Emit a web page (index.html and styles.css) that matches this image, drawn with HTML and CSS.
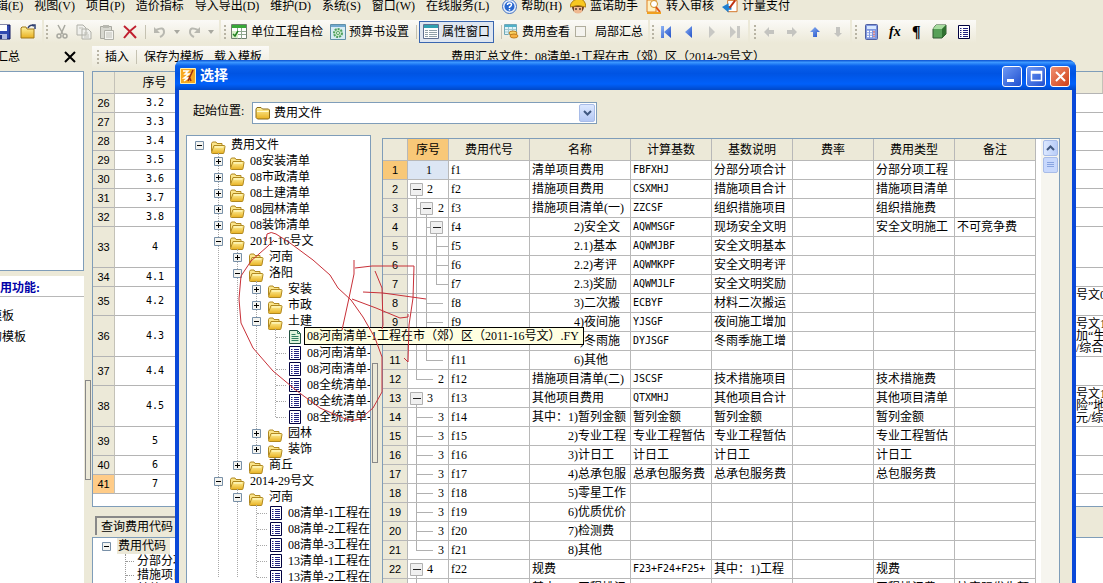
FILE: index.html
```html
<!DOCTYPE html>
<html lang="zh-CN">
<head>
<meta charset="utf-8">
<title>选择</title>
<link rel="stylesheet" href="styles.css">
</head>
<body>
<svg class="defs" aria-hidden="true">
  <defs>
    <linearGradient id="gold" x1="0" y1="0" x2="0" y2="1"><stop offset="0" stop-color="#fff3a0"/><stop offset="1" stop-color="#e8b020"/></linearGradient>
    <linearGradient id="arrow" x1="0" y1="0" x2="1" y2="1"><stop offset="0" stop-color="#8fb4f4"/><stop offset="1" stop-color="#2050c8"/></linearGradient>
  </defs>
  <symbol id="folders" viewBox="0 0 16 14"><path d="M1.500 11.500v-8l1-1.500h3.500l1 1.500h5v2" fill="#fbe58a" stroke="#b08820"/><path d="M4 5.500h10q1 0 1 1l-1 6q0 1-1 1H2.500q-1 0-1-1z" fill="url(#gold)" stroke="#b08820"/><path d="M5 7h8" stroke="#fffbd0"/></symbol>
  <symbol id="folder" viewBox="0 0 16 14"><path d="M1 11.500V3l1-1.500h4L7.500 3h6l1 1v8l-1 1h-11z" fill="url(#gold)" stroke="#8c6a14"/><path d="M2 5.500h11.500" stroke="#fffbd0"/></symbol>
  <symbol id="list" viewBox="0 0 12 14"><path d="M.5.5h11v13H.5z" fill="#fff" stroke="#000040"/><path d="M2 3.500h1.500M5 3.500h5M2 5.500h1.500M5 5.500h5M2 7.500h1.500M5 7.500h5M2 9.500h1.500M5 9.500h5M2 11.500h1.500M5 11.500h5" stroke="#202080"/></symbol>
  <symbol id="page" viewBox="0 0 12 14"><path d="M.5.5h8l3 3v10H.5z" fill="#e0f4dc" stroke="#205040"/><path d="M8.500.5v3h3M2.500 4.500h4M2.500 6.500h7M2.500 8.500h7M2.500 10.500h7" fill="none" stroke="#308060"/></symbol>
  <symbol id="plus" viewBox="0 0 9 9"><path d="M.5.5h8v8h-8z" fill="#f4f4f0" stroke="#7890a8"/><path d="M2 4.500h5M4.500 2v5" stroke="#000"/></symbol>
  <symbol id="minus" viewBox="0 0 9 9"><path d="M.5.5h8v8h-8z" fill="#f4f4f0" stroke="#7890a8"/><path d="M2 4.500h5" stroke="#000"/></symbol>
  <symbol id="t-box1"><path d="M8.500 15v4" stroke="#b0b0b0"/><path d="M2.500 3.500h12v12h-12z" fill="#f0f0f0" stroke="#b0b0b0"/><path d="M5 9.500h8" stroke="#222"/></symbol>
  <symbol id="t-box2"><path d="M8.500 0v19M8 9.500h4M18.500 15v4" stroke="#b0b0b0"/><path d="M12.500 3.500h12v12h-12z" fill="#f0f0f0" stroke="#b0b0b0"/><path d="M15 9.500h8" stroke="#222"/></symbol>
  <symbol id="t-box3"><path d="M8.500 0v19M18.500 0v19M18 9.500h4M28.500 15v4" stroke="#b0b0b0"/><path d="M22.500 3.500h12v12h-12z" fill="#f0f0f0" stroke="#b0b0b0"/><path d="M25 9.500h8" stroke="#222"/></symbol>
  <symbol id="t-leaf3"><path d="M8.500 0v19M18.500 0v19M28.500 0v19M28 9.500h12" stroke="#b0b0b0"/></symbol>
  <symbol id="t-end3"><path d="M8.500 0v19M18.500 0v19M28.500 0v9M28 9.500h12" stroke="#b0b0b0"/></symbol>
  <symbol id="t-leaf2"><path d="M8.500 0v19M18.500 0v19M18 9.500h17" stroke="#b0b0b0"/></symbol>
  <symbol id="t-end2"><path d="M8.500 0v19M18.500 0v9M18 9.500h17" stroke="#b0b0b0"/></symbol>
  <symbol id="t-leaf1"><path d="M8.500 0v19M8 9.500h17" stroke="#b0b0b0"/></symbol>
  <symbol id="t-end1"><path d="M8.500 0v9M8 9.500h17" stroke="#b0b0b0"/></symbol>
</svg>

<div class="app">
  <nav class="menubar">
    <button>编辑(E)</button><button>视图(V)</button><button>项目(P)</button><button>造价指标</button><button>导入导出(D)</button><button>维护(D)</button><button>系统(S)</button><button>窗口(W)</button><button>在线服务(L)</button>
    <div class="helpers">
    <button><svg width="15" height="15" viewBox="0 0 15 15"><circle cx="7.500" cy="7.500" r="7" fill="#e8f0fc" stroke="#4070c0"/><circle cx="7.500" cy="7.500" r="5" fill="#2868d0"/><path d="M5.500 6q0-2 2-2t2 1.700q0 1-2 2.300v1M7.500 10v1.500" fill="none" stroke="#fff" stroke-width="1.500"/></svg>帮助(H)</button>
    <button><svg width="16" height="15" viewBox="0 0 16 15"><circle cx="8" cy="8" r="6" fill="#704020"/><path d="M4 8h8v5q-4 3-8 0z" fill="#f0b890"/><path d="M0 8q1-7 8-8t8 8q-8-3-16 0z" fill="#f8c820" stroke="#b08010"/><path d="M6 9v2M10 9v2" stroke="#000"/></svg>蓝诺助手</button>
    <button><svg width="16" height="15" viewBox="0 0 16 15"><path d="M1 1h9v12H1z" fill="#fff0c0" stroke="#e08020"/><circle cx="8" cy="5" r="3.500" fill="#fff" stroke="#d09020"/><path d="M10 8l4 5" stroke="#e05010" stroke-width="2"/><path d="M1 14h14" stroke="#f0a020" stroke-width="2"/></svg>转入审核</button>
    <button><svg width="16" height="15" viewBox="0 0 17 15"><path d="M6 1h10v12H6z" fill="#fff" stroke="#d07020"/><path d="M0 8l7-4v3h3v4H7v3z" fill="#2080d0"/><path d="M14 1L8 9" stroke="#c03010" stroke-width="2"/></svg>计量支付</button>
    </div>
  </nav>

  <div class="toolbars">
    <div class="strip strip-file">
      <button aria-label="保存"><svg width="16" height="16" viewBox="0 0 16 16"><path d="M1 1h14v14H1z" fill="#3048b0" stroke="#101860"/><path d="M4 1h8v6H4z" fill="#fff"/><path d="M4 10h8v5H4z" fill="#b0b8e0"/><path d="M5 11h2v4H5z" fill="#203080"/></svg></button>
      <button aria-label="打开"><svg width="17" height="16" viewBox="0 0 17 16"><path d="M1 14V4l1-1h4l1 2h7v9z" fill="url(#gold)" stroke="#a07818"/><path d="M8 4q2-4 6-2M12 1h3v4" fill="none" stroke="#304070" stroke-width="1.500"/></svg></button>
    </div>
    <div class="strip strip-edit">
      <i class="grip"></i>
      <button aria-label="剪切"><svg width="14" height="16" viewBox="0 0 14 16"><path d="M3 1l5 9M10 1L6 10" stroke="#a8a8a0" stroke-width="1.500"/><circle cx="4" cy="12" r="2" fill="none" stroke="#a8a8a0" stroke-width="1.500"/><circle cx="10" cy="12" r="2" fill="none" stroke="#a8a8a0" stroke-width="1.500"/></svg></button>
      <button aria-label="复制"><svg width="16" height="16" viewBox="0 0 16 16"><path d="M1 1h6l3 3v7H1zM6 5h6l3 3v7H6z" fill="#f0f0ec" stroke="#b0b0a8"/><path d="M8 9h4M8 11h5M8 13h5M3 4h4" stroke="#c0c0b8"/></svg></button>
      <button aria-label="粘贴"><svg width="16" height="16" viewBox="0 0 16 16"><path d="M1.500 2.500h11v12h-11z" fill="#d8d8d0" stroke="#a8a8a0"/><path d="M4 1h6v3H4z" fill="#b8b8b0"/><path d="M5.500 6.500h9v9h-9z" fill="#f4f4f0" stroke="#b0b0a8"/><path d="M7 9h6M7 11h6M7 13h6" stroke="#c0c0b8"/></svg></button>
      <button aria-label="删除"><svg width="16" height="16" viewBox="0 0 16 16"><path d="M2 2q6 5 12 12M14 2Q7 7 2 14" fill="none" stroke="#c02030" stroke-width="2"/></svg></button>
      <i class="sep"></i>
      <button aria-label="撤销"><svg width="14" height="14" viewBox="0 0 14 14"><path d="M3 5q8-4 8 2 0 3-4 5" fill="none" stroke="#b8b8b0" stroke-width="2"/><path d="M1 2v6h6z" fill="#b8b8b0"/></svg></button>
      <i class="caret"></i>
      <button aria-label="重做"><svg width="14" height="14" viewBox="0 0 14 14"><path d="M11 5Q3 1 3 7q0 3 4 5" fill="none" stroke="#b8b8b0" stroke-width="2"/><path d="M13 2v6H7z" fill="#b8b8b0"/></svg></button>
      <i class="caret"></i>
    </div>
    <div class="strip strip-view">
      <i class="grip"></i>
      <button><svg width="17" height="16" viewBox="0 0 17 16"><path d="M.5.5h15v14H.5z" fill="#fff" stroke="#708070"/><path d="M1 1h14v3H1z" fill="#38a838"/><path d="M1 7.500h14M1 10.500h14M6.500 4v11M10.500 4v11" stroke="#90a890"/><path d="M1 7h6v7H1z" fill="#d8f0c8"/><path d="M2 10l2 2 3-5" fill="none" stroke="#208020" stroke-width="1.500"/></svg>单位工程自检</button>
      <button><svg width="16" height="16" viewBox="0 0 16 16"><path d="M.5.5h15v15H.5z" fill="#d8ecf4" stroke="#6090a8"/><path d="M1 1h14v2H1z" fill="#70a8d0"/><circle cx="8" cy="9" r="4" fill="#c8e8c8" stroke="#50a060" stroke-width="2" stroke-dasharray="2 1"/><circle cx="8" cy="9" r="1.500" fill="#fff" stroke="#50a060"/></svg>预算书设置</button>
      <i class="sep"></i>
      <button class="pressed"><svg width="16" height="15" viewBox="0 0 16 15"><path d="M.5.5h15v14H.5z" fill="#fff" stroke="#607090"/><path d="M1 1h14v3H1z" fill="#30a0b0"/><path d="M2 6.500h3M6 6.500h8M2 8.500h3M6 8.500h8M2 10.500h3M6 10.500h8M2 12.500h3M6 12.500h8" stroke="#90a0a8"/></svg>属性窗口</button>
      <i class="sep"></i>
      <button><svg width="15" height="15" viewBox="0 0 15 15"><path d="M.5.5h12v10H.5z" fill="#e0f4f8" stroke="#70a8b8"/><path d="M1 1h11v2H1z" fill="#50b0c8"/><path d="M1 5.500h11M1 8h11M4.500 3v8M8.500 3v8" stroke="#a0c8d0"/><ellipse cx="9" cy="9" rx="4" ry="2" fill="#f8d060" stroke="#c08020"/><ellipse cx="10" cy="12" rx="4" ry="2" fill="#f8b040" stroke="#c08020"/></svg>费用查看</button>
      <label class="check"><input type="checkbox">局部汇总</label>
    </div>
    <div class="strip strip-nav">
      <i class="grip"></i>
      <button aria-label="第一"><svg width="12" height="14" viewBox="0 0 12 14"><path d="M1 1h3v12H1zM11 1v12L4 7z" fill="url(#arrow)"/></svg></button>
      <button aria-label="上一"><svg width="12" height="14" viewBox="0 0 12 14"><path d="M9 1v12L2 7z" fill="url(#arrow)"/></svg></button>
      <button aria-label="下一"><svg width="12" height="14" viewBox="0 0 12 14"><path d="M3 1v12l6-6z" fill="#c8c8c4"/></svg></button>
      <button aria-label="最后"><svg width="12" height="14" viewBox="0 0 12 14"><path d="M1 1v12l6-6zM8 1h3v12H8z" fill="#c8c8c4"/></svg></button>
    </div>
    <div class="strip strip-move">
      <i class="grip"></i>
      <button aria-label="左移"><svg width="12" height="12" viewBox="0 0 12 12"><path d="M1 6l5-5v3h5v4H6v3z" fill="#c4c4c0"/></svg></button>
      <button aria-label="右移"><svg width="12" height="12" viewBox="0 0 12 12"><path d="M11 6L6 1v3H1v4h5v3z" fill="#c4c4c0"/></svg></button>
      <button aria-label="上移"><svg width="12" height="12" viewBox="0 0 12 12"><path d="M6 1l5 5H8v5H4V6H1z" fill="url(#arrow)"/></svg></button>
      <button aria-label="下移"><svg width="12" height="12" viewBox="0 0 12 12"><path d="M6 11L2 7h2V1h4v6h2z" fill="#c4c4c0"/></svg></button>
    </div>
    <div class="strip strip-tools">
      <i class="grip"></i>
      <button aria-label="计算器"><svg width="13" height="16" viewBox="0 0 13 16"><rect x=".5" y=".5" width="12" height="15" rx="1" fill="#8098e0" stroke="#5060a0"/><path d="M2 2h9v3H2z" fill="#d8e8ff"/><path d="M2 7.500h9M2 10h9M2 12.500h9" stroke="#fff" stroke-width="1.500" stroke-dasharray="2 1"/><path d="M9 7v6" stroke="#d06060" stroke-width="1.500" stroke-dasharray="1.500 1"/></svg></button>
      <button aria-label="函数" class="fx">fx</button>
      <button aria-label="段落" class="pilcrow">¶</button>
      <button aria-label="模型"><svg width="15" height="15" viewBox="0 0 15 15"><path d="M1 5l3-4h10v9l-4 4H1z" fill="#58a058" stroke="#305830"/><path d="M1 5l3-4h10l-4 4z" fill="#a8dca0"/><path d="M10 5l4-4v9l-4 4z" fill="#307030"/></svg></button>
      <button aria-label="列表"><svg width="12" height="14"><use href="#list"/></svg></button>
    </div>
  </div>

  <div class="workspace">
    <aside class="side">
      <header class="side-head"><span>费用汇总</span><button aria-label="关闭"><svg width="12" height="12" viewBox="0 0 12 12"><path d="M1 1l10 10M11 1L1 11" stroke="#000" stroke-width="2"/></svg></button></header>
      <div class="side-tree"></div>
      <div class="side-links">
        <h2><span>常用功能:</span></h2>
        <a href="#" class="link-a">载入模板</a>
        <a href="#" class="link-b">我的模板</a>
      </div>
    </aside>
    <div class="splitter"><i></i></div>
    <main class="main">
      <header class="main-head">
        <div class="strip strip-tpl"><i class="grip"></i><button>插入</button><i class="sep"></i><button>保存为模板</button><button>载入模板</button></div>
        <p>费用汇总文件：08清单-1工程在市（郊）区（2014-29号文）</p>
      </header>
      <div class="sheet">
        <table class="back-table">
          <colgroup><col class="c-num"><col class="c-seq"><col><col class="c-note"></colgroup>
          <thead><tr><th></th><th>序号</th><th></th><th></th></tr></thead>
          <tbody>
            <tr><th>26</th><td>3.2</td><td></td><td></td></tr>
            <tr><th>27</th><td>3.3</td><td></td><td></td></tr>
            <tr><th>28</th><td>3.4</td><td></td><td></td></tr>
            <tr><th>29</th><td>3.5</td><td></td><td></td></tr>
            <tr><th>30</th><td>3.6</td><td></td><td></td></tr>
            <tr><th>31</th><td>3.7</td><td></td><td></td></tr>
            <tr><th>32</th><td>3.8</td><td></td><td></td></tr>
            <tr class="tall"><th>33</th><td>4</td><td></td><td></td></tr>
            <tr><th>34</th><td>4.1</td><td></td><td></td></tr>
            <tr class="mid"><th>35</th><td>4.2</td><td></td><td class="note one">号文0</td></tr>
            <tr class="tall"><th>36</th><td>4.3</td><td></td><td class="note">号文1<br>加“生<br>/综合</td></tr>
            <tr class="mid"><th>37</th><td>4.4</td><td></td><td></td></tr>
            <tr class="tall"><th>38</th><td>4.5</td><td></td><td class="note">号文1<br>险”地<br>元/综</td></tr>
            <tr class="mid"><th>39</th><td>5</td><td></td><td></td></tr>
            <tr><th>40</th><td>6</td><td></td><td></td></tr>
            <tr><th class="hot">41</th><td>7</td><td></td><td></td></tr>
          </tbody>
        </table>
      </div>
      <div class="tabs"><button>查询费用代码</button></div>
      <div class="codes">
        <div class="codes-root"><svg width="9" height="9"><use href="#minus"/></svg><span>费用代码</span></div>
        <ul><li>分部分项合计</li><li>措施项目合计</li><li>其他项目合计</li></ul>
      </div>
    </main>
  </div>
</div>

<section class="dialog" role="dialog" aria-labelledby="dlg-title">
  <header class="titlebar">
    <svg width="16" height="16" viewBox="0 0 16 16"><path d="M.5.5h15v15H.5z" fill="#f8a820" stroke="#fff0b0"/><path d="M3 3h5l-3 3h4l-5 4h4l-4 3" fill="none" stroke="#fff" stroke-width="1.500"/><path d="M13 2L8 13M9 8l2 5" stroke="#a03010" stroke-width="1.500"/></svg>
    <h1 id="dlg-title">选择</h1>
    <button aria-label="最小化"><svg width="19" height="19" viewBox="0 0 19 19"><path d="M4 12h7v3H4z" fill="#fff"/></svg></button>
    <button aria-label="最大化"><svg width="19" height="19" viewBox="0 0 19 19"><path d="M4.500 4.500h10v9h-10zM4 6h11" fill="none" stroke="#fff" stroke-width="1.500"/></svg></button>
    <button aria-label="关闭" class="close"><svg width="19" height="19" viewBox="0 0 19 19"><path d="M5 5l9 9M14 5l-9 9" stroke="#fff" stroke-width="2"/></svg></button>
  </header>
  <div class="dialog-body">
    <div class="start">
      <label for="start">起始位置:</label>
      <div class="combo">
        <svg width="16" height="14"><use href="#folder"/></svg>
        <select id="start"><option>费用文件</option></select>
        <span class="drop"><svg width="9" height="6" viewBox="0 0 9 6"><path d="M1 1l3.500 3.500L8 1" fill="none" stroke="#405880" stroke-width="2"/></svg></span>
      </div>
    </div>
    <div class="panes">
      <div class="tree">
        <ul>
          <li><div><svg class="x"><use href="#minus"/></svg><svg class="f"><use href="#folders"/></svg>费用文件</div>
            <ul>
              <li><div><svg class="x"><use href="#plus"/></svg><svg class="f"><use href="#folders"/></svg>08安装清单</div></li>
              <li><div><svg class="x"><use href="#plus"/></svg><svg class="f"><use href="#folders"/></svg>08市政清单</div></li>
              <li><div><svg class="x"><use href="#plus"/></svg><svg class="f"><use href="#folders"/></svg>08土建清单</div></li>
              <li><div><svg class="x"><use href="#plus"/></svg><svg class="f"><use href="#folders"/></svg>08园林清单</div></li>
              <li><div><svg class="x"><use href="#plus"/></svg><svg class="f"><use href="#folders"/></svg>08装饰清单</div></li>
              <li><div><svg class="x"><use href="#minus"/></svg><svg class="f"><use href="#folders"/></svg>2011-16号文</div>
                <ul>
                  <li><div><svg class="x"><use href="#plus"/></svg><svg class="f"><use href="#folders"/></svg>河南</div></li>
                  <li><div><svg class="x"><use href="#minus"/></svg><svg class="f"><use href="#folders"/></svg>洛阳</div>
                    <ul>
                      <li><div><svg class="x"><use href="#plus"/></svg><svg class="f"><use href="#folders"/></svg>安装</div></li>
                      <li><div><svg class="x"><use href="#plus"/></svg><svg class="f"><use href="#folders"/></svg>市政</div></li>
                      <li><div><svg class="x"><use href="#minus"/></svg><svg class="f"><use href="#folders"/></svg>土建</div>
                        <ul class="files">
                          <li><div><svg class="d"><use href="#page"/></svg>08河南清单-</div></li>
                          <li><div><svg class="d"><use href="#list"/></svg>08河南清单-</div></li>
                          <li><div><svg class="d"><use href="#list"/></svg>08河南清单-</div></li>
                          <li><div><svg class="d"><use href="#list"/></svg>08全统清单-</div></li>
                          <li><div><svg class="d"><use href="#list"/></svg>08全统清单-</div></li>
                          <li><div><svg class="d"><use href="#list"/></svg>08全统清单-</div></li>
                        </ul></li>
                      <li><div><svg class="x"><use href="#plus"/></svg><svg class="f"><use href="#folders"/></svg>园林</div></li>
                      <li><div><svg class="x"><use href="#plus"/></svg><svg class="f"><use href="#folders"/></svg>装饰</div></li>
                    </ul></li>
                  <li><div><svg class="x"><use href="#plus"/></svg><svg class="f"><use href="#folders"/></svg>商丘</div></li>
                </ul></li>
              <li><div><svg class="x"><use href="#minus"/></svg><svg class="f"><use href="#folders"/></svg>2014-29号文</div>
                <ul>
                  <li><div><svg class="x"><use href="#minus"/></svg><svg class="f"><use href="#folders"/></svg>河南</div>
                    <ul class="files">
                      <li><div><svg class="d"><use href="#list"/></svg>08清单-1工程在</div></li>
                      <li><div><svg class="d"><use href="#list"/></svg>08清单-2工程在</div></li>
                      <li><div><svg class="d"><use href="#list"/></svg>08清单-3工程在</div></li>
                      <li><div><svg class="d"><use href="#list"/></svg>13清单-1工程在</div></li>
                      <li><div><svg class="d"><use href="#list"/></svg>13清单-2工程在</div></li>
                    </ul></li>
                </ul></li>
            </ul></li>
        </ul>
      </div>
      <div class="splitter inner"><i></i></div>
      <div class="grid-pane">
        <table class="grid">
          <colgroup><col class="g-num"><col class="g-seq"><col class="g-std"><col class="g-name"><col class="g-std"><col class="g-std"><col class="g-std"><col class="g-std"><col class="g-std"></colgroup>
          <thead><tr><th></th><th class="hot">序号</th><th>费用代号</th><th>名称</th><th>计算基数</th><th>基数说明</th><th>费率</th><th>费用类型</th><th>备注</th></tr></thead>
          <tbody>
            <tr><th class="hot">1</th><td class="sel">1</td><td>f1</td><td>清单项目费用</td><td class="code">FBFXHJ</td><td>分部分项合计</td><td></td><td>分部分项工程</td><td></td></tr>
            <tr><th>2</th><td class="seq"><svg class="w1"><use href="#t-box1"/></svg>2</td><td>f2</td><td>措施项目费用</td><td class="code">CSXMHJ</td><td>措施项目合计</td><td></td><td>措施项目清单</td><td></td></tr>
            <tr><th>3</th><td class="seq"><svg class="w2"><use href="#t-box2"/></svg>2</td><td>f3</td><td>措施项目清单(一)</td><td class="code">ZZCSF</td><td>组织措施项目</td><td></td><td>组织措施费</td><td></td></tr>
            <tr><th>4</th><td class="seq"><svg class="w3"><use href="#t-box3"/></svg></td><td>f4</td><td class="in-deep">2)安全文</td><td class="code">AQWMSGF</td><td>现场安全文明</td><td></td><td>安全文明施工</td><td>不可竞争费</td></tr>
            <tr><th>5</th><td class="seq"><svg class="w3"><use href="#t-leaf3"/></svg></td><td>f5</td><td class="in-deep">2.1)基本</td><td class="code">AQWMJBF</td><td>安全文明基本</td><td></td><td></td><td></td></tr>
            <tr><th>6</th><td class="seq"><svg class="w3"><use href="#t-leaf3"/></svg></td><td>f6</td><td class="in-deep">2.2)考评</td><td class="code">AQWMKPF</td><td>安全文明考评</td><td></td><td></td><td></td></tr>
            <tr><th>7</th><td class="seq"><svg class="w3"><use href="#t-end3"/></svg></td><td>f7</td><td class="in-deep">2.3)奖励</td><td class="code">AQWMJLF</td><td>安全文明奖励</td><td></td><td></td><td></td></tr>
            <tr><th>8</th><td class="seq"><svg class="w3"><use href="#t-leaf2"/></svg></td><td>f8</td><td class="in-deep">3)二次搬</td><td class="code">ECBYF</td><td>材料二次搬运</td><td></td><td></td><td></td></tr>
            <tr><th>9</th><td class="seq"><svg class="w3"><use href="#t-leaf2"/></svg></td><td>f9</td><td class="in-deep">4)夜间施</td><td class="code">YJSGF</td><td>夜间施工增加</td><td></td><td></td><td></td></tr>
            <tr><th>10</th><td class="seq"><svg class="w3"><use href="#t-leaf2"/></svg></td><td>f10</td><td class="in-deep">5)冬雨施</td><td class="code">DYJSGF</td><td>冬雨季施工增</td><td></td><td></td><td></td></tr>
            <tr><th>11</th><td class="seq"><svg class="w3"><use href="#t-end2"/></svg></td><td>f11</td><td class="in-deep">6)其他</td><td></td><td></td><td></td><td></td><td></td></tr>
            <tr><th>12</th><td class="seq"><svg class="w2"><use href="#t-end1"/></svg>2</td><td>f12</td><td>措施项目清单(二)</td><td class="code">JSCSF</td><td>技术措施项目</td><td></td><td>技术措施费</td><td></td></tr>
            <tr><th>13</th><td class="seq"><svg class="w1"><use href="#t-box1"/></svg>3</td><td>f13</td><td>其他项目费用</td><td class="code">QTXMHJ</td><td>其他项目合计</td><td></td><td>其他项目清单</td><td></td></tr>
            <tr><th>14</th><td class="seq"><svg class="w2"><use href="#t-leaf1"/></svg>3</td><td>f14</td><td>其中：1)暂列金额</td><td>暂列金额</td><td>暂列金额</td><td></td><td>暂列金额</td><td></td></tr>
            <tr><th>15</th><td class="seq"><svg class="w2"><use href="#t-leaf1"/></svg>3</td><td>f15</td><td class="in">2)专业工程</td><td>专业工程暂估</td><td>专业工程暂估</td><td></td><td>专业工程暂估</td><td></td></tr>
            <tr><th>16</th><td class="seq"><svg class="w2"><use href="#t-leaf1"/></svg>3</td><td>f16</td><td class="in">3)计日工</td><td>计日工</td><td>计日工</td><td></td><td>计日工</td><td></td></tr>
            <tr><th>17</th><td class="seq"><svg class="w2"><use href="#t-leaf1"/></svg>3</td><td>f17</td><td class="in">4)总承包服</td><td>总承包服务费</td><td>总承包服务费</td><td></td><td>总包服务费</td><td></td></tr>
            <tr><th>18</th><td class="seq"><svg class="w2"><use href="#t-leaf1"/></svg>3</td><td>f18</td><td class="in">5)零星工作</td><td></td><td></td><td></td><td></td><td></td></tr>
            <tr><th>19</th><td class="seq"><svg class="w2"><use href="#t-leaf1"/></svg>3</td><td>f19</td><td class="in">6)优质优价</td><td></td><td></td><td></td><td></td><td></td></tr>
            <tr><th>20</th><td class="seq"><svg class="w2"><use href="#t-leaf1"/></svg>3</td><td>f20</td><td class="in">7)检测费</td><td></td><td></td><td></td><td></td><td></td></tr>
            <tr><th>21</th><td class="seq"><svg class="w2"><use href="#t-end1"/></svg>3</td><td>f21</td><td class="in">8)其他</td><td></td><td></td><td></td><td></td><td></td></tr>
            <tr><th>22</th><td class="seq"><svg class="w1"><use href="#t-box1"/></svg>4</td><td>f22</td><td>规费</td><td class="code">F23+F24+F25+</td><td>其中：1)工程</td><td></td><td>规费</td><td></td></tr>
            <tr><th>23</th><td class="seq"><svg class="w2"><use href="#t-leaf1"/></svg>4</td><td>f23</td><td>其中：1)工程排污</td><td></td><td></td><td></td><td>工程排污费</td><td>按实际发生额</td></tr>
          </tbody>
        </table>
        <div class="scroll"><button aria-label="向上滚动"><svg width="9" height="6" viewBox="0 0 9 6"><path d="M1 5l3.500-3.500L8 5" fill="none" stroke="#405880" stroke-width="2"/></svg></button><i class="thumb"></i></div>
      </div>
    </div>
  </div>
  <div class="tooltip" role="tooltip">08河南清单-1工程在市（郊）区（2011-16号文）.FY</div>
</section>

<svg class="pen" width="1103" height="583" viewBox="0 0 1103 583" aria-hidden="true">
  <path d="M266 241l1-7q4-3 9 0l14 9 23 17 17 15 8 13 13 12 12 17 12 21 7 19v35l-9 16-13 11q-8 3-17-1l-23-10-23-17-24-20-20-23-12-25-2-24 2-23 10-15 17-15 6-6"/>
  <path d="M354 260v14l-5 24-7 32M355 268l17-2h42l-1 32-4 27-1 37-4-4M375 271l7 17 1 37-1 4M363 292l20 1 43 6M352 299l24 9 24 10 8-1v-3"/>
</svg>
</body>
</html>
```

FILE: styles.css
```css
* { box-sizing: border-box; }
html, body { height: 100%; }
body { margin: 0; overflow: hidden; position: relative; background: #ece9d8; color: #000; font: 12px/16px "Liberation Serif", "Noto Sans CJK SC", serif; }
button { display: flex; align-items: center; gap: 4px; padding: 0; border: 0; background: none; color: inherit; font: inherit; white-space: nowrap; flex: none; }
svg { display: block; flex: none; }
ul { list-style: none; margin: 0; padding: 0; }
h1, h2, p { margin: 0; }
table { border-collapse: separate; border-spacing: 0; table-layout: fixed; }
th { font-weight: normal; }
.defs { position: absolute; width: 0; height: 0; }

.app { height: 100%; display: flex; flex-direction: column; }
.menubar { display: flex; align-items: center; gap: 11px; height: 20px; padding-bottom: 8px; margin-left: -16px; flex: none; }
.helpers { display: flex; gap: 8px; padding-left: 2px; }
.toolbars { display: flex; gap: 2px; height: 23px; flex: none; }
.strip { display: flex; align-items: center; height: 23px; background: linear-gradient(#fbfaf7, #ece9d8); flex: none; }
.grip { width: 2px; height: 14px; flex: none; background: repeating-linear-gradient(#b8b4a4 0 2px, transparent 2px 4px); }
.sep { width: 1px; height: 14px; background: #c5c2b2; flex: none; }
.caret { border: 3px solid transparent; border-top: 4px solid #a8a8a0; border-bottom: 0; flex: none; }
.strip-file { width: 42px; gap: 9px; }
.strip-file button:first-child { margin-left: -5px; }
.strip-edit { width: 175px; padding-left: 2px; gap: 7px; }
.strip-view { width: 427px; padding-left: 3px; gap: 7px; }
.strip-view button { gap: 3px; }
.strip-view .grip { margin-right: -2px; }
.strip-view .sep { margin-right: -5px; }
.strip-view .pressed { height: 22px; padding: 0 3px; background: #dfe6f0; border: 1px solid #3a66b0; }
.check { display: flex; align-items: center; gap: 9px; margin-left: -2px; white-space: nowrap; }
.check input { appearance: none; width: 11px; height: 11px; margin: 0; border: 1px solid #b0ad9c; background: #f4f3ee; }
.strip-nav { width: 98px; padding-left: 2px; gap: 11px; }
.strip-nav .grip { margin-right: -5px; }
.strip-move { width: 100px; padding-left: 4px; gap: 11px; }
.strip-move .grip { margin-right: -4px; }
.strip-tools { width: 124px; padding-left: 3px; gap: 11px; }
.strip-tools .grip { margin-right: -3px; }
.fx { width: 12px; font-size: 14px; font-weight: bold; font-style: italic; }
.pilcrow { font-size: 16px; font-weight: bold; }

.workspace { flex: 1; min-height: 0; display: flex; }
.side { width: 84px; display: flex; flex-direction: column; flex: none; overflow: hidden; }
.side-head { display: flex; align-items: center; justify-content: space-between; height: 28px; padding-right: 8px; flex: none; }
.side-head span { margin-left: -28px; }
.side-tree { height: 200px; background: #fff; border: solid #7f9db9; border-width: 1px 1px 1px 0; flex: none; }
.side-links { flex: 1; margin-top: 5px; background: #fff; }
.side-links h2 { height: 21px; padding-top: 4px; border-bottom: 1px solid #b8b8b8; color: #0000a8; font-size: 12px; line-height: 16px; white-space: nowrap; }
.side-links h2 span { margin-left: -12px; }
.side-links a { display: block; height: 21px; color: #000; text-decoration: none; white-space: nowrap; }
.side-links .link-a { margin: 11px 0 0 -34px; }
.side-links .link-b { margin-left: -22px; }
.splitter { width: 8px; display: flex; align-items: flex-start; flex: none; }
.splitter i { width: 6px; height: 100px; margin: 337px 0 0 1px; border: 1px solid #888; background: #ece9d8; }
.main { flex: 1; min-width: 0; display: flex; flex-direction: column; }
.main-head { display: flex; align-items: center; height: 28px; flex: none; }
.main-head p { padding-left: 182px; white-space: nowrap; }
.strip-tpl { width: 177px; padding-left: 5px; gap: 7px; }
.strip-tpl .grip { margin-right: -1px; }
.strip-tpl button:last-child { margin-left: 3px; }
.sheet { height: 436px; border: 1px solid #7f9db9; border-right: 0; background: #fff; overflow: hidden; flex: none; }
.back-table { width: 100%; }
.c-num { width: 22px; }
.c-seq { width: 80px; }
.c-note { width: 27px; }
.back-table th, .back-table td { height: 19px; padding: 0; border-bottom: 1px solid #b4b4b4; text-align: center; overflow: hidden; white-space: nowrap; }
.back-table td { font-family: "DejaVu Sans Mono", "Noto Sans CJK SC", monospace; font-size: 10px; }
.back-table th { background: #ece9d8; border-right: 1px solid #c4c2b8; }
.back-table tbody th { font: 11px/14px "Liberation Sans", sans-serif; }
.back-table thead th { height: 22px; }
.back-table .mid td { height: 29px; }
.back-table .tall td { height: 41px; }
.back-table .note { text-align: left; font: 12px/12px "Liberation Serif", "Noto Sans CJK SC", serif; vertical-align: top; padding-top: 2px; }
.back-table .hot { background: #ffcc88; }
.tabs { height: 30px; padding: 9px 0 0 3px; flex: none; }
.tabs button { height: 19px; padding: 2px 4px; border: solid #888; border-width: 2px 0 0 2px; }
.codes { flex: 1; min-height: 0; overflow: hidden; background: #fff; border: solid #7f9db9; border-width: 1px 0 0 1px; }
.codes-root { display: flex; align-items: center; gap: 6px; padding-left: 9px; }
.codes-root span { padding: 0 4px 0 1px; background: #ece9d8; }
.codes ul { margin-left: 32px; border-left: 1px dotted #999; }
.codes li { display: flex; align-items: center; height: 14px; gap: 3px; white-space: nowrap; }
.codes li::before { content: ""; width: 8px; border-top: 1px dotted #999; }

.dialog { position: absolute; left: 175px; right: 27px; top: 60px; bottom: 0; display: flex; flex-direction: column; border: solid #0a48d8; border-width: 0 4px; border-radius: 8px 8px 0 0; background: #ece9d8; }
.titlebar { display: flex; align-items: center; gap: 4px; height: 30px; margin: 0 -4px; padding: 2px 6px 0 5px; border-radius: 8px 8px 0 0; background: linear-gradient(#0a50d0 0, #3c98ff 8%, #0860ec 20%, #0054e3 45%, #0060fa 80%, #0048c8 100%); flex: none; }
.titlebar h1 { flex: 1; color: #fff; font: bold 14px/18px "Liberation Serif", "Noto Sans CJK SC", serif; }
.titlebar button { width: 20px; height: 21px; border: 1px solid #fff; border-radius: 3px; background: linear-gradient(135deg, #6c98f4, #2050d0); justify-content: center; }
.titlebar .close { background: linear-gradient(135deg, #f09070, #d04018); }
.dialog-body { flex: 1; min-height: 0; display: flex; flex-direction: column; padding: 12px 12px 0 7px; }
.start { display: flex; align-items: flex-start; height: 33px; gap: 7px; padding-left: 7px; flex: none; }
.start label { width: 52px; white-space: nowrap; line-height: 18px; }
.combo { display: flex; align-items: center; width: 345px; height: 22px; padding-left: 2px; border: 1px solid #7f9db9; background: #fff; }
.combo select { flex: 1; height: 20px; padding: 0 0 0 3px; border: 0; appearance: none; background: none; font: inherit; color: #000; }
.drop { display: flex; align-items: center; justify-content: center; width: 16px; height: 18px; margin-right: 1px; border: 1px solid #a8bce8; border-radius: 2px; background: linear-gradient(#dce8ff, #b4c8f4); pointer-events: none; }
.panes { flex: 1; min-height: 0; display: flex; }
.tree { width: 185px; padding: 1px 0 0 8px; border: 1px solid #7f9db9; border-bottom: 0; background: #fff; overflow: hidden; flex: none; }
.tree ul ul { position: relative; margin-left: 19px; }
.tree ul ul::before { content: ""; position: absolute; left: 4px; top: 0; bottom: 8px; border-left: 1px dotted #a8a8a8; }
.tree li > div { display: flex; align-items: center; position: relative; height: 16px; white-space: nowrap; }
.tree .x { width: 9px; height: 9px; }
.tree .f { width: 16px; height: 14px; margin: 3px 5px 0 6px; }
.tree .d { width: 12px; height: 14px; margin-right: 6px; }
.files > li > div::before { content: ""; width: 10px; margin: 0 3px 0 5px; border-top: 1px dotted #a8a8a8; flex: none; }
.inner { width: 11px; }
.inner i { margin-top: 228px; }
.grid-pane { flex: 1; min-width: 0; display: flex; justify-content: space-between; align-items: flex-start; margin-top: 3px; border: solid #7f9db9; border-width: 1px 1px 0; background: #fff; overflow: hidden; }
.grid { width: 653px; flex: none; }
.g-num { width: 25px; }
.g-seq { width: 41px; }
.g-std { width: 81px; }
.g-name { width: 101px; }
.grid th, .grid td { height: 19px; padding: 0; border: solid #b8b8b8; border-width: 0 1px 1px 0; overflow: hidden; white-space: nowrap; }
.grid th { background: #ece9d8; }
.grid thead th { height: 22px; }
.grid tbody th { font: 11px/14px "Liberation Sans", sans-serif; }
.grid td { padding-left: 2px; line-height: 18px; }
.grid .hot { background: #f8c878; }
.grid .sel { background: #dce6f4; text-align: center; }
.grid .seq { display: flex; align-items: center; padding: 0; }
.grid .code { font-family: "DejaVu Sans Mono", monospace; font-size: 10px; }
.grid .in { padding-left: 38px; }
.grid .in-deep { padding-left: 44px; }
.seq svg { height: 18px; }
.w1 { width: 19px; }
.w2 { width: 30px; }
.w3 { width: 40px; }
.scroll { width: 18px; align-self: stretch; display: flex; flex-direction: column; align-items: center; gap: 1px; padding-top: 1px; background: #f6f5ef; }
.scroll button, .thumb { width: 15px; height: 16px; border: 1px solid #a8bce8; border-radius: 2px; background: linear-gradient(90deg, #dce8ff, #b8ccf8); justify-content: center; }
.thumb { padding: 4px 3px; background: repeating-linear-gradient(#88a4e0 0 1px, transparent 1px 2px) content-box, #c8d8fc; }
.tooltip { position: absolute; left: 125px; top: 267px; height: 18px; padding: 0 4px 0 2px; border: 1px solid #000; background: #ffffe1; white-space: nowrap; }
.pen { position: absolute; left: 0; top: 0; pointer-events: none; fill: none; stroke: #c83038; }
```
